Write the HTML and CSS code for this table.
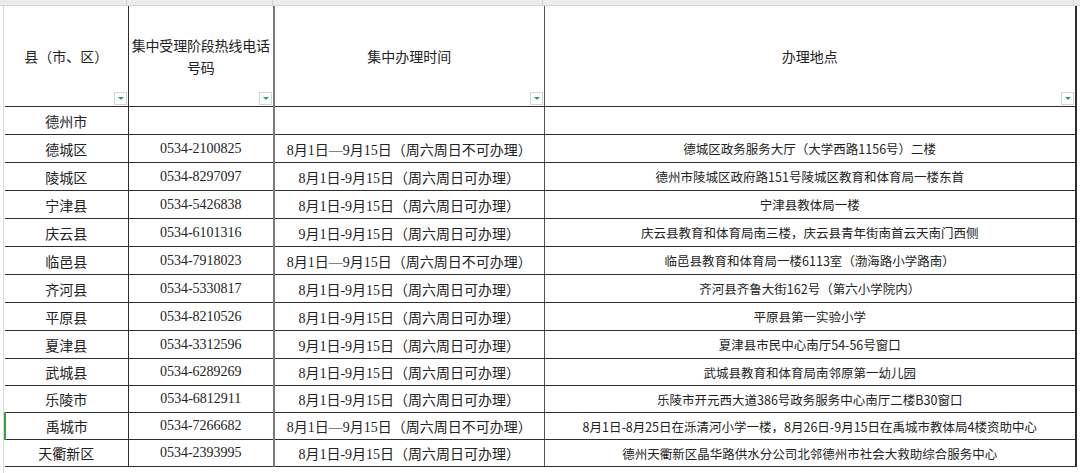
FILE: index.html
```html
<!DOCTYPE html>
<html lang="zh">
<head>
<meta charset="utf-8">
<title>集中受理</title>
<link rel="stylesheet" href="styles.css">
</head>
<body>
<div class="colbar">
  <span class="cb c1"></span><span class="cb c2"></span><span class="cb c3"></span><span class="cb c4"></span>
</div>
<div class="sheet">
<table class="grid">
  <colgroup>
    <col class="w1"><col class="w2"><col class="w3"><col class="w4">
  </colgroup>
  <thead>
    <tr class="head">
      <th class="b1">县（市、区）<span class="filter"></span></th>
      <th class="b2">集中受理阶段热线电话号码<span class="filter"></span></th>
      <th class="b3">集中办理时间<span class="filter"></span></th>
      <th class="b4">办理地点<span class="filter"></span></th>
    </tr>
  </thead>
  <tbody>
    <tr class="r28"><td class="name b1">德州市</td><td class="b2"></td><td class="b3"></td><td class="b4"></td></tr>
    <tr class="r28"><td class="name b1">德城区</td><td class="tel b2">0534-2100825</td><td class="time b3">8月1日—9月15日（周六周日不可办理）</td><td class="addr b4">德城区政务服务大厅（大学西路1156号）二楼</td></tr>
    <tr class="r28"><td class="name b1">陵城区</td><td class="tel b2">0534-8297097</td><td class="time b3">8月1日-9月15日（周六周日可办理）</td><td class="addr b4">德州市陵城区政府路151号陵城区教育和体育局一楼东首</td></tr>
    <tr class="r28"><td class="name b1">宁津县</td><td class="tel b2">0534-5426838</td><td class="time b3">8月1日-9月15日（周六周日可办理）</td><td class="addr b4">宁津县教体局一楼</td></tr>
    <tr class="r28"><td class="name b1">庆云县</td><td class="tel b2">0534-6101316</td><td class="time b3">9月1日-9月15日（周六周日可办理）</td><td class="addr b4">庆云县教育和体育局南三楼，庆云县青年街南首云天南门西侧</td></tr>
    <tr class="r28"><td class="name b1">临邑县</td><td class="tel b2">0534-7918023</td><td class="time b3">8月1日—9月15日（周六周日不可办理）</td><td class="addr b4">临邑县教育和体育局一楼6113室（渤海路小学路南）</td></tr>
    <tr class="r28"><td class="name b1">齐河县</td><td class="tel b2">0534-5330817</td><td class="time b3">8月1日-9月15日（周六周日可办理）</td><td class="addr b4">齐河县齐鲁大街162号（第六小学院内）</td></tr>
    <tr class="r28"><td class="name b1">平原县</td><td class="tel b2">0534-8210526</td><td class="time b3">8月1日-9月15日（周六周日可办理）</td><td class="addr b4">平原县第一实验小学</td></tr>
    <tr class="r28"><td class="name b1">夏津县</td><td class="tel b2">0534-3312596</td><td class="time b3">9月1日-9月15日（周六周日可办理）</td><td class="addr b4">夏津县市民中心南厅54-56号窗口</td></tr>
    <tr class="r27"><td class="name b1">武城县</td><td class="tel b2">0534-6289269</td><td class="time b3">8月1日-9月15日（周六周日可办理）</td><td class="addr b4">武城县教育和体育局南邻原第一幼儿园</td></tr>
    <tr class="r27"><td class="name b1">乐陵市</td><td class="tel b2">0534-6812911</td><td class="time b3">8月1日-9月15日（周六周日可办理）</td><td class="addr b4">乐陵市开元西大道386号政务服务中心南厅二楼B30窗口</td></tr>
    <tr class="r27"><td class="name b1 sel">禹城市</td><td class="tel b2">0534-7266682</td><td class="time b3">8月1日—9月15日（周六周日不可办理）</td><td class="addr b4">8月1日-8月25日在泺清河小学一楼，8月26日-9月15日在禹城市教体局4楼资助中心</td></tr>
    <tr class="r27"><td class="name b1">天衢新区</td><td class="tel b2">0534-2393995</td><td class="time b3">8月1日-9月15日（周六周日可办理）</td><td class="addr b4">德州天衢新区晶华路供水分公司北邻德州市社会大救助综合服务中心</td></tr>
  </tbody>
</table>
</div>
</body>
</html>
```

FILE: styles.css
```css
html, body {
  margin: 0;
  padding: 0;
  background: #ffffff;
}
body {
  width: 1080px;
  height: 473px;
  overflow: hidden;
  font-family: "Noto Sans CJK SC", "Noto Sans", sans-serif;
  color: #222222;
}
.colbar {
  height: 5px;
  background: #ececec;
  border-bottom: 1px solid #d6d6d6;
  display: flex;
  padding-left: 4px;
}
.cb {
  height: 5px;
  border-right: 1px solid #cfcfcf;
  box-sizing: border-box;
}
.cb.c1 { width: 123px; }
.cb.c2 { width: 146px; }
.cb.c3 { width: 270px; }
.cb.c4 { width: 531px; }
.sheet {
  border-left: 1px solid #d9d9d9;
  margin-left: 3px;
  height: 467px;
  background-image: linear-gradient(#ffffff, #ffffff);
}
.grid {
  border-collapse: collapse;
  table-layout: fixed;
  width: 1071px;
}
.w1 { width: 123px; }
.w2 { width: 146px; }
.w3 { width: 270px; }
.w4 { width: 532px; }
.grid th, .grid td {
  padding: 0 2px;
  text-align: center;
  vertical-align: middle;
  border-top: 1px solid #2e2e2e;
  border-bottom: 1px solid #2e2e2e;
  white-space: nowrap;
  overflow: hidden;
}
.grid .b1 { border-right: 1px solid #2e2e2e; }
.grid .b2 { border-right: 2px solid #7a7a7a; }
.grid .b3 { border-right: 1px solid #555555; }
.grid .b4 { border-right: 2px solid #2e2e2e; }
.grid thead th {
  border-top: none;
  height: 100px;
  font-weight: normal;
  font-size: 14px;
  line-height: 22px;
  white-space: normal;
  position: relative;
  color: #222222;
}
.grid thead th.b2 {
  padding: 0 1px;
  letter-spacing: -0.2px;
}
.filter {
  position: absolute;
  right: 1px;
  bottom: 1px;
  width: 11px;
  height: 11px;
  border: 1px solid #d4d4d4;
  background: #ffffff;
}
.filter::after {
  content: "";
  position: absolute;
  left: 3px;
  top: 4px;
  border-left: 3px solid transparent;
  border-right: 3px solid transparent;
  border-top: 3px solid #1fa870;
}
.r28 { height: 28px; }
.r27 { height: 27px; }
.name {
  font-size: 14px;
  color: #222222;
}
.tel {
  font-family: "Liberation Serif", "Noto Sans CJK SC", serif;
  font-size: 14px;
  color: #222222;
}
.time {
  font-family: "Liberation Serif", "Noto Sans CJK SC", serif;
  font-size: 14px;
  color: #222222;
}
.addr {
  font-size: 12.5px;
  color: #222222;
}
.grid td.sel {
  border-left: 2px solid #3f9f3f;
}
```
